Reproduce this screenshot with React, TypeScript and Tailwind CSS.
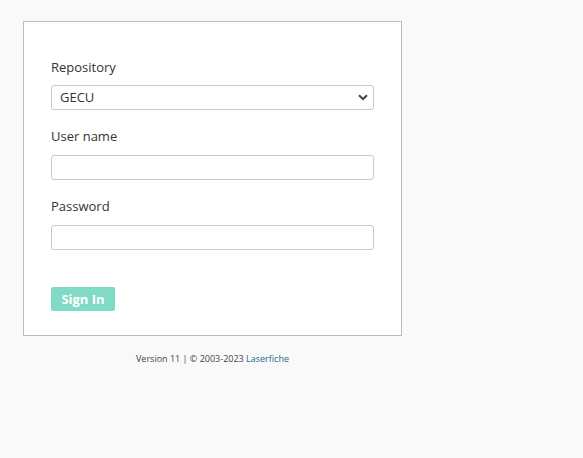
export default function App() {
  return (
    <div className="min-h-[458px] w-full bg-[#f9f9f9] font-['Open_Sans',sans-serif] text-[#333]">
      <div className="ml-[23px] w-[379px] pt-[21px]">
        {/* card */}
        <div className="border border-[#bcbcbc] bg-white pl-[27px] pr-[27px] pt-[35px] pb-[24px]">
          <label className="block text-[13px] leading-[20px] text-[#333]">Repository</label>
          <div className="relative mt-[8px]">
            <select className="block h-[25px] w-full appearance-none rounded-[3px] border border-[#c8c8c8] bg-white pl-[8px] text-[13px] text-[#333] outline-none">
              <option>GECU</option>
            </select>
            <svg
              className="pointer-events-none absolute right-[6px] top-[9px]"
              width="10"
              height="7"
              viewBox="0 0 10 7"
            >
              <path d="M1 1.2 L5 5 L9 1.2" fill="none" stroke="#444" strokeWidth="2" />
            </svg>
          </div>

          <label className="mt-[16px] block text-[13px] leading-[20px] text-[#333]">User name</label>
          <input
            type="text"
            className="mt-[9px] block h-[25px] w-full rounded-[3px] border border-[#c8c8c8] bg-white outline-none"
          />

          <label className="mt-[16px] block text-[13px] leading-[20px] text-[#333]">Password</label>
          <input
            type="password"
            className="mt-[9px] block h-[25px] w-full rounded-[3px] border border-[#c8c8c8] bg-white outline-none"
          />

          <button className="mt-[37px] block h-[24px] w-[64px] rounded-[2px] bg-[#7fdbc6] text-[13px] font-bold leading-[24px] text-white">
            Sign In
          </button>
        </div>

        {/* footer */}
        <p className="mt-[17px] text-center text-[9px] leading-[12px] text-[#444]">
          Version 11 | © 2003-2023 <span className="text-[#1b6a8c]">Laserfiche</span>
        </p>
      </div>
    </div>
  );
}
